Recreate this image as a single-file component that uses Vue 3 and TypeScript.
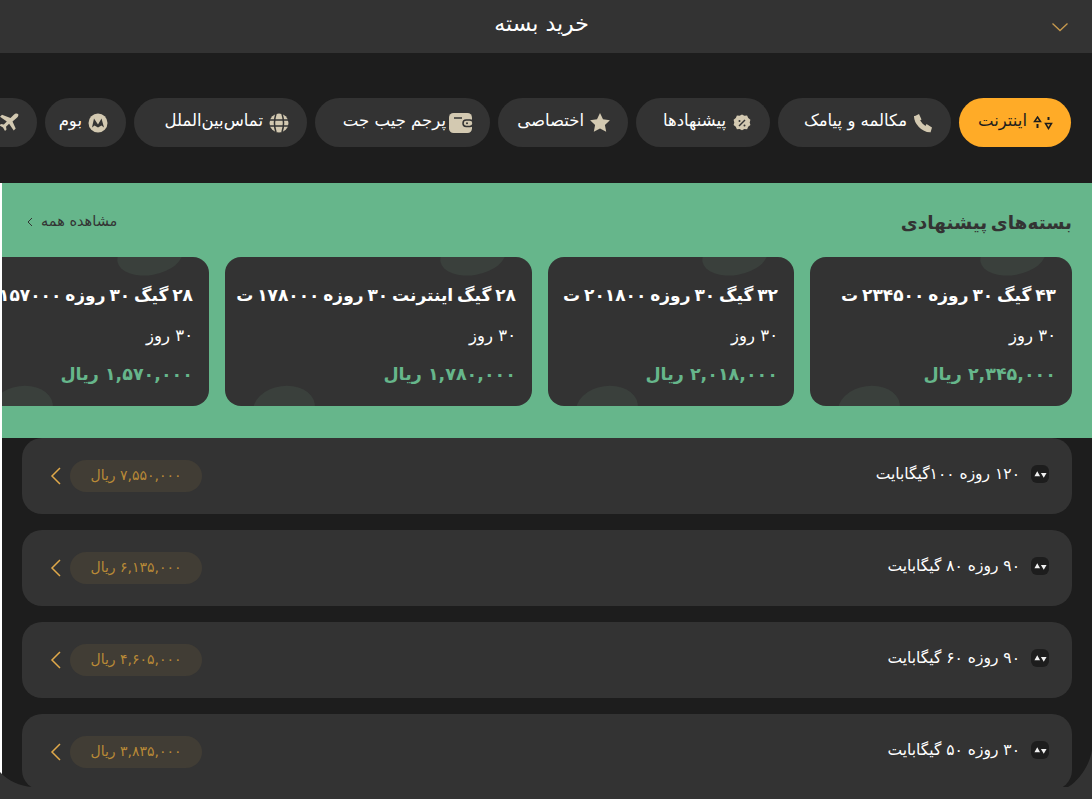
<script setup lang="ts">
const tabs = [
  { id: "net", label: "اینترنت", width: 112, active: true },
  { id: "call", label: "مکالمه و پیامک", width: 173 },
  { id: "offer", label: "پیشنهادها", width: 134 },
  { id: "star", label: "اختصاصی", width: 130 },
  { id: "wallet", label: "پرجم جیب جت", width: 175 },
  { id: "globe", label: "تماس‌بین‌الملل", width: 173 },
  { id: "boom", label: "بوم", width: 81 },
  { id: "plane", label: "", width: 100 },
];

const offers = [
  { title: "۴۳ گیگ ۳۰ روزه ۲۳۴۵۰۰ ت", days: "۳۰ روز", price: "۲,۳۴۵,۰۰۰ ریال", width: 262 },
  { title: "۳۲ گیگ ۳۰ روزه ۲۰۱۸۰۰ ت", days: "۳۰ روز", price: "۲,۰۱۸,۰۰۰ ریال", width: 246 },
  { title: "۲۸ گیگ اینترنت ۳۰ روزه ۱۷۸۰۰۰ ت", days: "۳۰ روز", price: "۱,۷۸۰,۰۰۰ ریال", width: 307 },
  { title: "۲۸ گیگ ۳۰ روزه ۱۵۷۰۰۰ ت", days: "۳۰ روز", price: "۱,۵۷۰,۰۰۰ ریال", width: 246 },
];

const rows = [
  { title: "۱۲۰ روزه ۱۰۰گیگابایت", price: "۷,۵۵۰,۰۰۰ ریال" },
  { title: "۹۰ روزه ۸۰ گیگابایت", price: "۶,۱۳۵,۰۰۰ ریال" },
  { title: "۹۰ روزه ۶۰ گیگابایت", price: "۴,۶۰۵,۰۰۰ ریال" },
  { title: "۳۰ روزه ۵۰ گیگابایت", price: "۳,۸۳۵,۰۰۰ ریال" },
];
</script>

<template>
  <div class="page" dir="rtl">
    <header class="top">
      <svg class="top-arrow" viewBox="0 0 18 10" width="18" height="10">
        <path d="M1.500 1.500 9 8.500l7.500-7" fill="none" stroke="#c79a4e" stroke-width="1.300" />
      </svg>
      <h1>خرید بسته</h1>
    </header>

    <nav class="tabs">
      <button
        v-for="tab in tabs"
        :key="tab.id"
        class="tab"
        :class="{ active: tab.active }"
        :style="{ width: tab.width + 'px' }"
      >
        <svg class="tab-icon" viewBox="0 0 20 20" width="20" height="20">
          <g v-if="tab.id === 'net'" fill="none" stroke="#1d1d1d" stroke-width="1.500">
            <path d="M4.500 4 7.500 8.500H1.500z" />
            <path d="M4.500 11v4" stroke-width="2" />
            <path d="M15.500 4v3" stroke-width="2" />
            <path d="M15.500 15.500 12.500 10.500h6z" />
          </g>
          <g v-else-if="tab.id === 'call'">
            <path d="M3.500 3C3.500 9.500 10 16.500 17 16.800" fill="none" stroke="#d3c9b1" stroke-width="5" />
            <path d="M1 3.500 6 1 8.500 6.500 5 9zM11.500 15l2-4 5.500 3.500-1.500 5z" fill="#d3c9b1" />
          </g>
          <g v-else-if="tab.id === 'offer'">
            <path
              d="M10 1.500l2.400 1.300 2.700-.2 1.100 2.500 2.200 1.600-.7 2.700.7 2.700-2.200 1.600-1.100 2.500-2.700-.2-2.400 1.300-2.400-1.300-2.700.2-1.100-2.500-2.200-1.600.7-2.700-.7-2.700 2.200-1.600 1.100-2.500 2.700.2z"
              fill="#d3c9b1"
            />
            <path d="M7 13l6-6" stroke="#333" stroke-width="1.500" />
            <circle cx="7.500" cy="8" r="1" fill="#333" />
            <circle cx="12.500" cy="12.500" r="1" fill="#333" />
          </g>
          <path
            v-else-if="tab.id === 'star'"
            d="M10 0l3 6.300 6.900.9-5 4.700 1.300 6.900-6.200-3.400-6.200 3.400 1.300-6.900-5-4.700 6.900-.9z"
            fill="#d3c9b1"
          />
          <g v-else-if="tab.id === 'wallet'">
            <rect x="-3" y="0" width="23" height="20" rx="4.500" fill="#d3c9b1" />
            <path d="M2 5h8" stroke="#333" stroke-width="1.500" />
            <rect x="11" y="7" width="10" height="6.500" rx="3.200" fill="#d3c9b1" stroke="#333" stroke-width="1.500" />
            <circle cx="15" cy="10.200" r="1" fill="#333" />
          </g>
          <g v-else-if="tab.id === 'globe'">
            <circle cx="10" cy="10" r="9.500" fill="#d3c9b1" />
            <path d="M7 .8c-2 6-2 12.400 0 18.400M13 .8c2 6 2 12.400 0 18.400M.8 7h18.400M.8 13h18.400" fill="none" stroke="#333" stroke-width="1.500" />
          </g>
          <g v-else-if="tab.id === 'boom'">
            <circle cx="10" cy="10" r="9.500" fill="#d3c9b1" />
            <path d="M4 14.500 6 5.500l4 6L13.500 5.500 16 14.500l-2.500-2-3.500 2-3.500-2z" fill="#333" />
          </g>
          <path
            v-else
            d="M19 1c-1-1-3-.5-4.200.7L11.500 5 3 1.800 1 3.800l6.800 4.600-3 3.100-2.900-.5L.4 12.500l3.600 2 2 3.600 1.500-1.500-.5-2.900 3.100-3 4.600 6.800 2-2L13.500 8.500l3.800-3.300C19 4 20 2 19 1z"
            fill="#d3c9b1"
          />
        </svg>
        <span v-if="tab.label">{{ tab.label }}</span>
      </button>
    </nav>

    <main class="content">
      <section class="offers">
        <div class="offers-head">
          <h2>بسته‌های پیشنهادی</h2>
          <a class="see-all">
            <span>مشاهده همه</span>
            <svg viewBox="0 0 6 10" width="6" height="10">
              <path d="M5 1 1 5l4 4" fill="none" stroke="#333" stroke-width="1" />
            </svg>
          </a>
        </div>
        <div class="offer-list">
          <article
            v-for="offer in offers"
            :key="offer.title"
            class="offer"
            :style="{ width: offer.width + 'px' }"
          >
            <span class="blob blob-top"></span>
            <span class="blob blob-bottom"></span>
            <h3>{{ offer.title }}</h3>
            <p class="days">{{ offer.days }}</p>
            <p class="offer-price">{{ offer.price }}</p>
          </article>
        </div>
      </section>

      <section class="rows">
        <div v-for="row in rows" :key="row.title" class="row">
          <div class="row-title">
            <span class="row-icon">
              <svg viewBox="0 0 12 8" width="13" height="9">
                <path d="M3 1 5.600 5.500H.4zM9 7 6.400 2.500h5.200z" fill="#f0f0f0" />
              </svg>
            </span>
            <span>{{ row.title }}</span>
          </div>
          <div class="row-end">
            <span class="row-price"><span>{{ row.price }}</span></span>
            <svg viewBox="0 0 12 20" width="12" height="20">
              <path d="M10 2 2 10l8 8" fill="none" stroke="#e0a94a" stroke-width="1.500" />
            </svg>
          </div>
        </div>
      </section>
    </main>

    <svg class="bottom-bar" viewBox="0 0 1092 49" width="1092" height="49" preserveAspectRatio="none">
      <path d="M0 22C8 31 20 36 32 37H1068C1080 30 1090 14 1092 0V49H0z" fill="#333" />
    </svg>
  </div>
</template>

<style scoped>
.page {
  position: relative;
  width: 1092px;
  height: 799px;
  overflow: hidden;
  background: #1d1d1d;
  font-family: "DejaVu Sans", "Noto Sans", sans-serif;
  color: #fff;
}
.top {
  position: relative;
  height: 53px;
  display: flex;
  align-items: center;
  justify-content: center;
  background: #333;
}
.top h1 {
  margin: 0 9px 6px 0;
  font-size: 22px;
  font-weight: 500;
}
.top-arrow {
  position: absolute;
  right: 23px;
  top: 22px;
}
.tabs {
  display: flex;
  gap: 8px;
  height: 130px;
  box-sizing: border-box;
  padding: 45px 21px 0 0;
  overflow: hidden;
}
.tab {
  flex: none;
  box-sizing: border-box;
  height: 49px;
  display: flex;
  align-items: center;
  justify-content: flex-start;
  gap: 6px;
  padding: 0 18px 0 0;
  border: 0;
  border-radius: 25px;
  background: #333;
  color: #fff;
  font: inherit;
  font-size: 16.500px;
  white-space: nowrap;
}
.tab span {
  padding-bottom: 4px;
}
.tab.active {
  background: #ffab27;
  color: #1d1d1d;
}
.tab-icon {
  flex: none;
  overflow: visible;
}
.content {
  height: 616px;
  padding-left: 2px;
  background: linear-gradient(#fff, #fff) left / 2px 100% no-repeat;
  overflow: hidden;
}
.offers {
  height: 255px;
  box-sizing: border-box;
  padding-top: 26px;
  background: #66b68b;
  overflow: hidden;
}
.offers-head {
  display: flex;
  align-items: center;
  justify-content: space-between;
  height: 26px;
  padding: 0 20px 0 25px;
  color: #333;
}
.offers-head h2 {
  margin: 0;
  font-size: 18.500px;
  font-weight: 700;
  word-spacing: -3px;
}
.see-all {
  display: flex;
  align-items: center;
  gap: 8px;
  font-size: 14.500px;
}
.see-all span {
  padding-bottom: 3px;
}
.offer-list {
  display: flex;
  gap: 16px;
  margin-top: 22px;
  padding-right: 20px;
}
.offer {
  position: relative;
  flex: none;
  box-sizing: border-box;
  height: 149px;
  padding: 25px 16px 0;
  border-radius: 16px;
  background: #333;
  overflow: hidden;
  white-space: nowrap;
}
.offer h3 {
  position: relative;
  margin: 0;
  font-size: 17px;
  font-weight: 700;
  line-height: 26px;
  word-spacing: -2px;
}
.days {
  position: relative;
  margin: 18px 0 0;
  font-size: 16.500px;
  line-height: 20px;
}
.offer-price {
  position: relative;
  margin: 17px 0 0;
  font-size: 17.500px;
  font-weight: 700;
  line-height: 22px;
  color: #66b68b;
}
.blob {
  position: absolute;
  background: #3a403c;
}
.blob-top {
  top: -20px;
  right: 26px;
  width: 66px;
  height: 38px;
  border-radius: 50%;
  transform: rotate(-10deg);
}
.blob-bottom {
  bottom: -24px;
  left: 28px;
  width: 62px;
  height: 44px;
  border-radius: 50%;
  transform: rotate(-8deg);
}
.rows {
  display: flex;
  flex-direction: column;
  gap: 16px;
  padding: 0 20px;
}
.row {
  flex: none;
  height: 76px;
  display: flex;
  align-items: center;
  justify-content: space-between;
  padding: 0 23px 0 28px;
  border-radius: 20px;
  background: #333;
}
.row-title {
  display: flex;
  align-items: center;
  gap: 11px;
  margin-bottom: 4px;
  font-size: 15.500px;
}
.row-icon {
  width: 18px;
  height: 18px;
  display: flex;
  align-items: center;
  justify-content: center;
  border-radius: 6px;
  background: #1d1d1d;
}
.row-end {
  display: flex;
  align-items: center;
  gap: 8px;
}
.row-price {
  width: 132px;
  height: 32px;
  display: flex;
  align-items: center;
  justify-content: center;
  border-radius: 16px;
  background: #413d35;
  color: #b98a37;
  font-size: 14px;
}
.row-price span {
  padding-bottom: 3px;
}
.bottom-bar {
  position: absolute;
  left: 0;
  bottom: 0;
  pointer-events: none;
}
</style>

<style>
html,
body {
  margin: 0;
  background: #fff;
}
</style>
